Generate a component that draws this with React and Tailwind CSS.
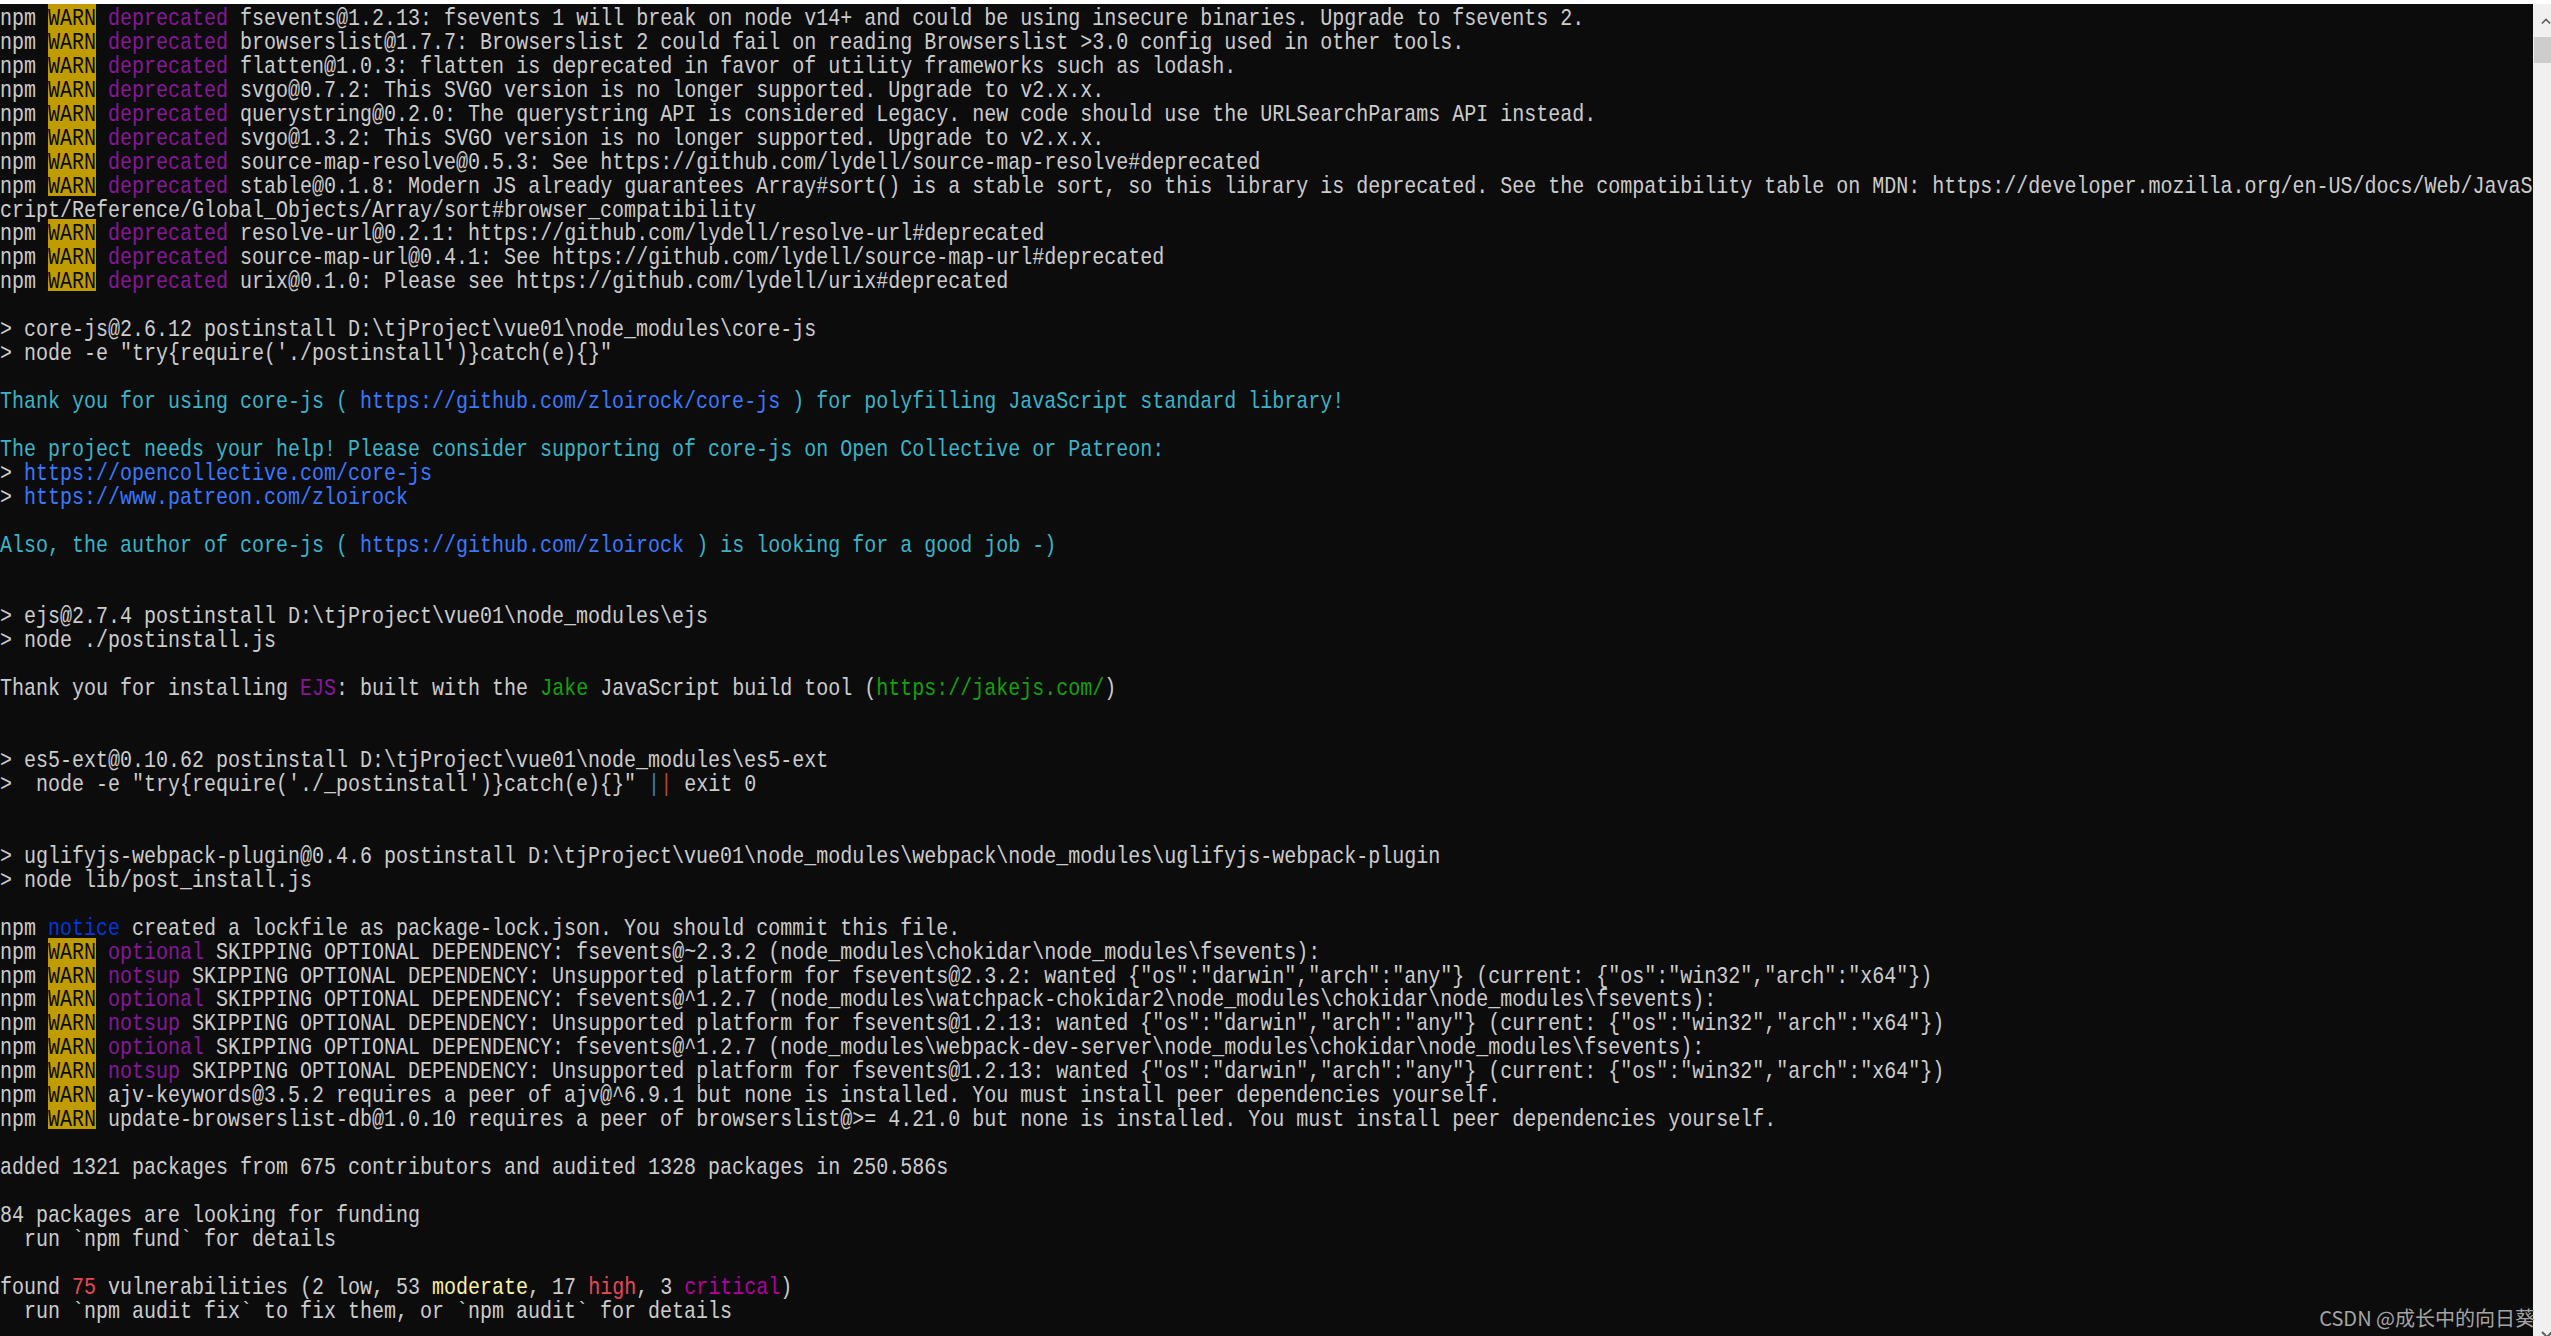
import React from 'react';

const G = 'text-[#cccccc]';
const W = 'warn';
const MAG = 'text-[#881798]';
const CY = 'text-[#3ab4c6]';
const BL = 'text-[#3b78ff]';
const GR = 'text-[#13a10e]';
const NB = 'text-[#0037da]';

const warn = (tag, rest) => [
  ['npm ', G],
  ['WARN', W],
  [' ', G],
  [tag, MAG],
  [rest, G],
];

const plainWarn = (rest) => [
  ['npm ', G],
  ['WARN', W],
  [rest, G],
];

const rows = [
  warn('deprecated', ' fsevents@1.2.13: fsevents 1 will break on node v14+ and could be using insecure binaries. Upgrade to fsevents 2.'),
  warn('deprecated', ' browserslist@1.7.7: Browserslist 2 could fail on reading Browserslist >3.0 config used in other tools.'),
  warn('deprecated', ' flatten@1.0.3: flatten is deprecated in favor of utility frameworks such as lodash.'),
  warn('deprecated', ' svgo@0.7.2: This SVGO version is no longer supported. Upgrade to v2.x.x.'),
  warn('deprecated', ' querystring@0.2.0: The querystring API is considered Legacy. new code should use the URLSearchParams API instead.'),
  warn('deprecated', ' svgo@1.3.2: This SVGO version is no longer supported. Upgrade to v2.x.x.'),
  warn('deprecated', ' source-map-resolve@0.5.3: See https://github.com/lydell/source-map-resolve#deprecated'),
  warn('deprecated', ' stable@0.1.8: Modern JS already guarantees Array#sort() is a stable sort, so this library is deprecated. See the compatibility table on MDN: https://developer.mozilla.org/en-US/docs/Web/JavaS'),
  [['cript/Reference/Global_Objects/Array/sort#browser_compatibility', G]],
  warn('deprecated', ' resolve-url@0.2.1: https://github.com/lydell/resolve-url#deprecated'),
  warn('deprecated', ' source-map-url@0.4.1: See https://github.com/lydell/source-map-url#deprecated'),
  warn('deprecated', ' urix@0.1.0: Please see https://github.com/lydell/urix#deprecated'),
  [],
  [['> core-js@2.6.12 postinstall D:\\tjProject\\vue01\\node_modules\\core-js', G]],
  [['> node -e "try{require(\'./postinstall\')}catch(e){}"', G]],
  [],
  [
    ['Thank you for using core-js ( ', CY],
    ['https://github.com/zloirock/core-js', BL],
    [' ) for polyfilling JavaScript standard library!', CY],
  ],
  [],
  [['The project needs your help! Please consider supporting of core-js on Open Collective or Patreon:', CY]],
  [['> ', G], ['https://opencollective.com/core-js', BL]],
  [['> ', G], ['https://www.patreon.com/zloirock', BL]],
  [],
  [
    ['Also, the author of core-js ( ', CY],
    ['https://github.com/zloirock', BL],
    [' ) is looking for a good job -)', CY],
  ],
  [],
  [],
  [['> ejs@2.7.4 postinstall D:\\tjProject\\vue01\\node_modules\\ejs', G]],
  [['> node ./postinstall.js', G]],
  [],
  [
    ['Thank you for installing ', G],
    ['EJS', MAG],
    [': built with the ', G],
    ['Jake', GR],
    [' JavaScript build tool (', G],
    ['https://jakejs.com/', GR],
    [')', G],
  ],
  [],
  [],
  [['> es5-ext@0.10.62 postinstall D:\\tjProject\\vue01\\node_modules\\es5-ext', G]],
  [
    ['>  node -e "try{require(\'./_postinstall\')}catch(e){}" ', G],
    ['|', 'text-[#3a80b8]'],
    ['|', 'text-[#b04a2a]'],
    [' exit 0', G],
  ],
  [],
  [],
  [['> uglifyjs-webpack-plugin@0.4.6 postinstall D:\\tjProject\\vue01\\node_modules\\webpack\\node_modules\\uglifyjs-webpack-plugin', G]],
  [['> node lib/post_install.js', G]],
  [],
  [['npm ', G], ['notice', NB], [' created a lockfile as package-lock.json. You should commit this file.', G]],
  warn('optional', ' SKIPPING OPTIONAL DEPENDENCY: fsevents@~2.3.2 (node_modules\\chokidar\\node_modules\\fsevents):'),
  warn('notsup', ' SKIPPING OPTIONAL DEPENDENCY: Unsupported platform for fsevents@2.3.2: wanted {"os":"darwin","arch":"any"} (current: {"os":"win32","arch":"x64"})'),
  warn('optional', ' SKIPPING OPTIONAL DEPENDENCY: fsevents@^1.2.7 (node_modules\\watchpack-chokidar2\\node_modules\\chokidar\\node_modules\\fsevents):'),
  warn('notsup', ' SKIPPING OPTIONAL DEPENDENCY: Unsupported platform for fsevents@1.2.13: wanted {"os":"darwin","arch":"any"} (current: {"os":"win32","arch":"x64"})'),
  warn('optional', ' SKIPPING OPTIONAL DEPENDENCY: fsevents@^1.2.7 (node_modules\\webpack-dev-server\\node_modules\\chokidar\\node_modules\\fsevents):'),
  warn('notsup', ' SKIPPING OPTIONAL DEPENDENCY: Unsupported platform for fsevents@1.2.13: wanted {"os":"darwin","arch":"any"} (current: {"os":"win32","arch":"x64"})'),
  plainWarn(' ajv-keywords@3.5.2 requires a peer of ajv@^6.9.1 but none is installed. You must install peer dependencies yourself.'),
  plainWarn(' update-browserslist-db@1.0.10 requires a peer of browserslist@>= 4.21.0 but none is installed. You must install peer dependencies yourself.'),
  [],
  [['added 1321 packages from 675 contributors and audited 1328 packages in 250.586s', G]],
  [],
  [['84 packages are looking for funding', G]],
  [['  run `npm fund` for details', G]],
  [],
  [
    ['found ', G],
    ['75', 'text-[#e74856]'],
    [' vulnerabilities (2 low, 53 ', G],
    ['moderate', 'text-[#f9f1a5]'],
    [', 17 ', G],
    ['high', 'text-[#e74856]'],
    [', 3 ', G],
    ['critical', 'text-[#b4009e]'],
    [')', G],
  ],
  [['  run `npm audit fix` to fix them, or `npm audit` for details', G]],
];

// console glyphs are taller and sit lower than Liberation Mono's
const glyph = 'whitespace-pre translate-y-[3px] scale-y-[1.2]';

const Row = ({ parts }) => (
  <div className="flex h-[23.95px] items-stretch leading-[23.95px]">
    {parts.map(([text, cls], i) =>
      cls === W ? (
        <span key={i} className="flex bg-[#c19c00] text-[#0c0c0c]">
          <span className={glyph}>{text}</span>
        </span>
      ) : (
        <span key={i} className={`${glyph} ${cls}`}>
          {text}
        </span>
      )
    )}
  </div>
);

const Chevron = ({ down }) => (
  <svg width="12" height="8" viewBox="0 0 12 8">
    <polyline
      points={down ? '1,1 6,6 11,1' : '1,7 6,2 11,7'}
      fill="none"
      stroke="#606060"
      strokeWidth="2"
    />
  </svg>
);

export default function App() {
  return (
    <div className="relative flex h-[1336px] w-full flex-col overflow-hidden bg-white">
      <div className="h-1 shrink-0 bg-white" />
      <div className="flex min-h-0 flex-1">
        <div className="min-w-0 flex-1 overflow-hidden bg-[#0c0c0c] font-['Liberation_Mono',monospace] text-[20px]">
          {rows.map((parts, i) => (
            <Row key={i} parts={parts} />
          ))}
        </div>
        {/* scrollbar */}
        <div className="flex w-[18px] shrink-0 flex-col overflow-hidden bg-[#f0f0f0]">
          <div className="flex h-[33px] items-center pl-[8px]">
            <Chevron />
          </div>
          <div className="ml-px h-[26px] bg-[#cdcdcd]" />
          <div className="mt-auto h-[5px] overflow-hidden pl-[8px]">
            <Chevron down />
          </div>
        </div>
      </div>
      <div className="absolute bottom-[8px] right-[16px] font-['Noto_Sans_CJK_SC',sans-serif] text-[20px] leading-none text-[#a4a4a4]">
        CSDN @成长中的向日葵
      </div>
    </div>
  );
}
